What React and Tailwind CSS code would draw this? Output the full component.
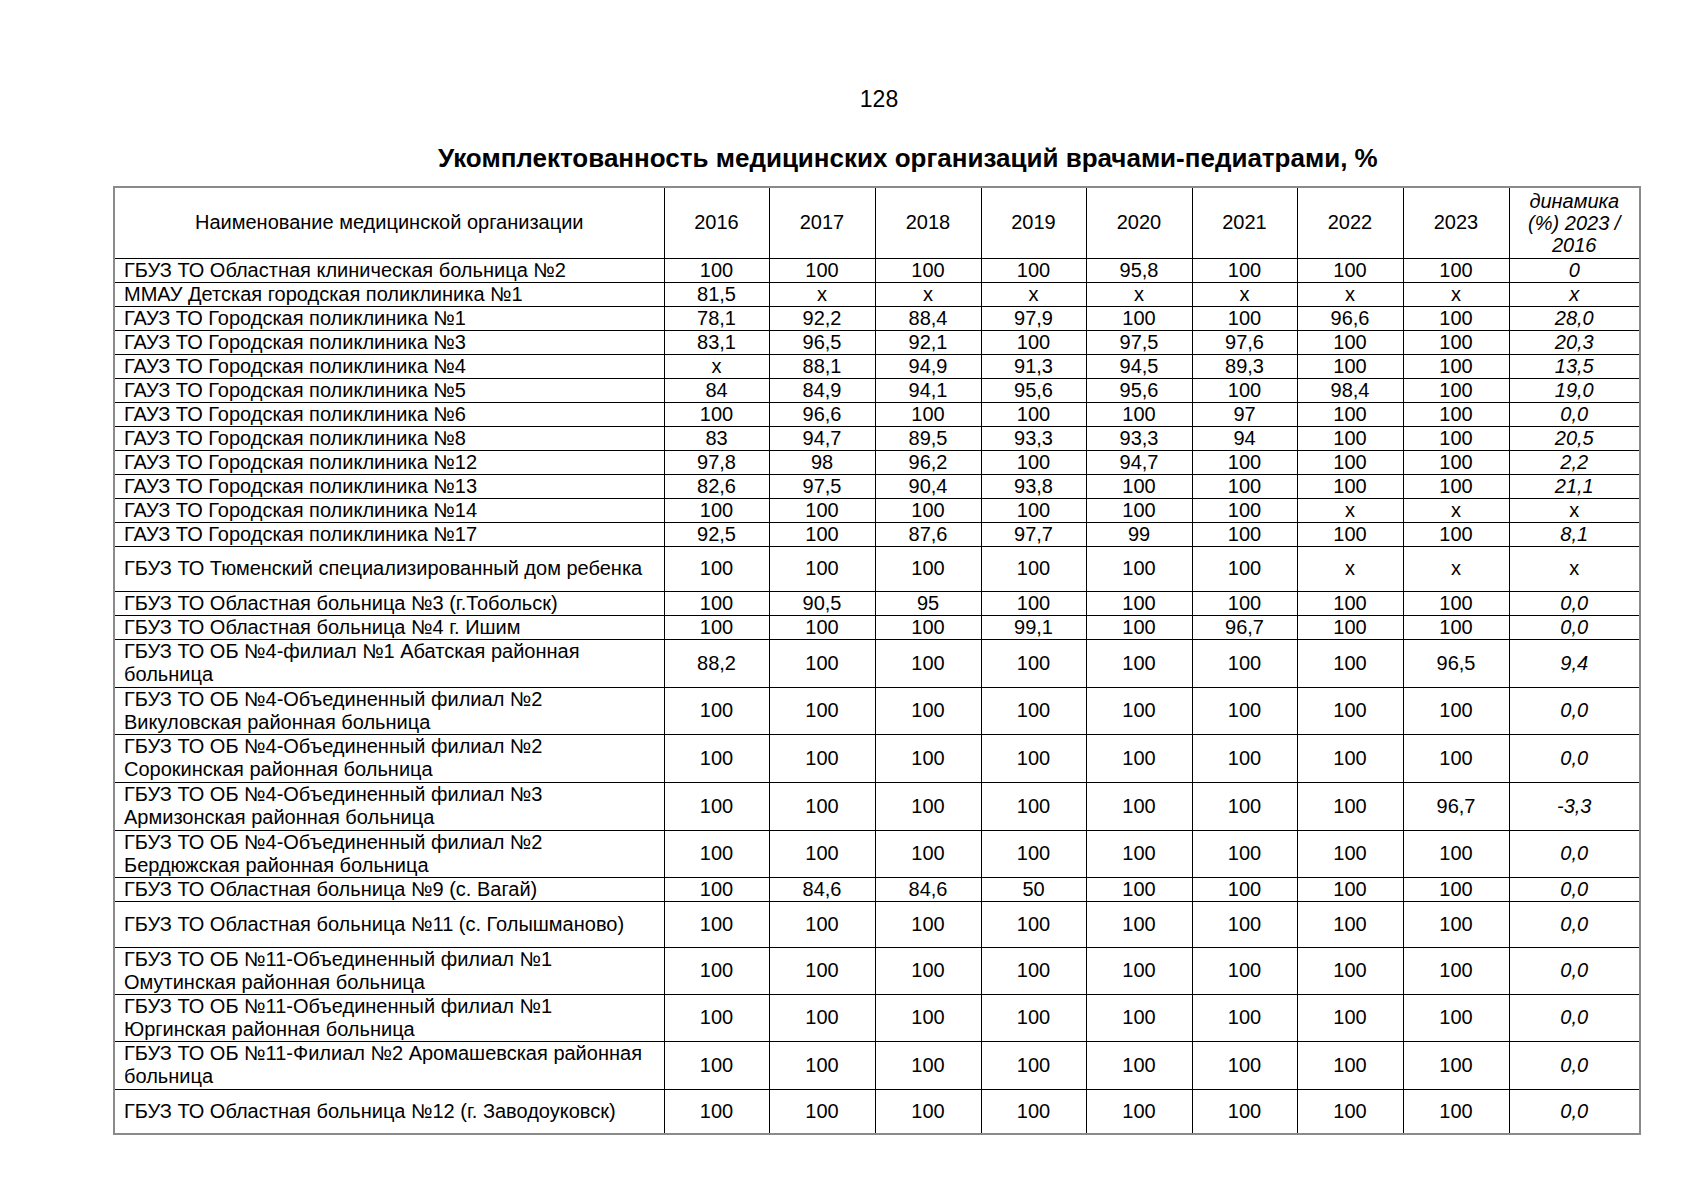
// Staffing of medical organisations with paediatricians, report page 128.
// Numbers are kept as strings so the decimal commas and "x" stay as printed.
const years = ['2016', '2017', '2018', '2019', '2020', '2021', '2022', '2023'];

const ALL_100 = ['100', '100', '100', '100', '100', '100', '100', '100'];

const rows = [
  { name: 'ГБУЗ ТО Областная клиническая больница №2', values: ['100', '100', '100', '100', '95,8', '100', '100', '100'], dyn: '0' },
  { name: 'ММАУ Детская городская поликлиника №1', values: ['81,5', 'x', 'x', 'x', 'x', 'x', 'x', 'x'], dyn: 'x' },
  { name: 'ГАУЗ ТО Городская поликлиника №1', values: ['78,1', '92,2', '88,4', '97,9', '100', '100', '96,6', '100'], dyn: '28,0' },
  { name: 'ГАУЗ ТО Городская поликлиника №3', values: ['83,1', '96,5', '92,1', '100', '97,5', '97,6', '100', '100'], dyn: '20,3' },
  { name: 'ГАУЗ ТО Городская поликлиника №4', values: ['x', '88,1', '94,9', '91,3', '94,5', '89,3', '100', '100'], dyn: '13,5' },
  { name: 'ГАУЗ ТО Городская поликлиника №5', values: ['84', '84,9', '94,1', '95,6', '95,6', '100', '98,4', '100'], dyn: '19,0' },
  { name: 'ГАУЗ ТО Городская поликлиника №6', values: ['100', '96,6', '100', '100', '100', '97', '100', '100'], dyn: '0,0' },
  { name: 'ГАУЗ ТО Городская поликлиника №8', values: ['83', '94,7', '89,5', '93,3', '93,3', '94', '100', '100'], dyn: '20,5' },
  { name: 'ГАУЗ ТО Городская поликлиника №12', values: ['97,8', '98', '96,2', '100', '94,7', '100', '100', '100'], dyn: '2,2' },
  { name: 'ГАУЗ ТО Городская поликлиника №13', values: ['82,6', '97,5', '90,4', '93,8', '100', '100', '100', '100'], dyn: '21,1' },
  { name: 'ГАУЗ ТО Городская поликлиника №14', values: ['100', '100', '100', '100', '100', '100', 'x', 'x'], dyn: 'x', upright: true },
  { name: 'ГАУЗ ТО Городская поликлиника №17', values: ['92,5', '100', '87,6', '97,7', '99', '100', '100', '100'], dyn: '8,1' },
  { name: 'ГБУЗ ТО Тюменский специализированный дом ребенка', values: ['100', '100', '100', '100', '100', '100', 'x', 'x'], dyn: 'x', upright: true, height: 'h-[45px]' },
  { name: 'ГБУЗ ТО Областная больница №3 (г.Тобольск)', values: ['100', '90,5', '95', '100', '100', '100', '100', '100'], dyn: '0,0' },
  { name: 'ГБУЗ ТО Областная больница №4 г. Ишим', values: ['100', '100', '100', '99,1', '100', '96,7', '100', '100'], dyn: '0,0' },
  { name: ['ГБУЗ ТО ОБ №4-филиал №1 Абатская районная', 'больница'], values: ['88,2', '100', '100', '100', '100', '100', '100', '96,5'], dyn: '9,4', height: 'h-[48px]' },
  { name: ['ГБУЗ ТО ОБ №4-Объединенный филиал №2', 'Викуловская районная больница'], values: ALL_100, dyn: '0,0', height: 'h-[47px]' },
  { name: ['ГБУЗ ТО ОБ №4-Объединенный филиал №2', 'Сорокинская районная больница'], values: ALL_100, dyn: '0,0', height: 'h-[48px]' },
  { name: ['ГБУЗ ТО ОБ №4-Объединенный филиал №3', 'Армизонская районная больница'], values: ['100', '100', '100', '100', '100', '100', '100', '96,7'], dyn: '-3,3', height: 'h-[48px]' },
  { name: ['ГБУЗ ТО ОБ №4-Объединенный филиал №2', 'Бердюжская районная больница'], values: ALL_100, dyn: '0,0', height: 'h-[46px]' },
  { name: 'ГБУЗ ТО Областная больница №9 (с. Вагай)', values: ['100', '84,6', '84,6', '50', '100', '100', '100', '100'], dyn: '0,0' },
  { name: 'ГБУЗ ТО Областная больница №11 (с. Голышманово)', values: ALL_100, dyn: '0,0', height: 'h-[46px]' },
  { name: ['ГБУЗ ТО ОБ №11-Объединенный филиал №1', 'Омутинская районная больница'], values: ALL_100, dyn: '0,0', height: 'h-[47px]' },
  { name: ['ГБУЗ ТО ОБ №11-Объединенный филиал №1', 'Юргинская районная больница'], values: ALL_100, dyn: '0,0', height: 'h-[47px]' },
  { name: ['ГБУЗ ТО ОБ №11-Филиал №2 Аромашевская районная', 'больница'], values: ALL_100, dyn: '0,0', height: 'h-[48px]' },
  { name: 'ГБУЗ ТО Областная больница №12 (г. Заводоуковск)', values: ALL_100, dyn: '0,0', height: 'h-[45px]' },
];

function NameCell({ name }) {
  const lines = Array.isArray(name) ? name : [name];
  return (
    <td className="border border-black px-[9px] py-0 text-left align-middle">
      {lines.map((line, i) => (
        <span key={i} className="block whitespace-nowrap">
          {line}
        </span>
      ))}
    </td>
  );
}

export default function App() {
  return (
    <div
      className="min-h-[1200px] bg-white pl-[113px] pt-[86px] text-black"
      style={{ fontFamily: '"Liberation Sans", Arial, sans-serif' }}
    >
      <div className="w-[1526px] pl-[6px] text-center text-[23px] leading-[26px]">128</div>

      <h1 className="mt-[32px] pl-[325px] text-[26px] font-bold leading-[28px] whitespace-nowrap">
        Укомплектованность медицинских организаций врачами-педиатрами, %
      </h1>

      <table className="mt-[14px] w-[1526px] table-fixed border-collapse border-2 border-[#8a8a8a] text-[20px] leading-[23px]">
        <colgroup>
          <col className="w-[550px]" />
          <col className="w-[105px]" />
          <col className="w-[106px]" />
          <col className="w-[106px]" />
          <col className="w-[105px]" />
          <col className="w-[106px]" />
          <col className="w-[105px]" />
          <col className="w-[106px]" />
          <col className="w-[106px]" />
          <col className="w-[131px]" />
        </colgroup>
        <thead>
          <tr className="h-[71px]">
            <th className="border border-black px-2 text-center align-middle font-normal">
              Наименование медицинской организации
            </th>
            {years.map((year) => (
              <th key={year} className="border border-black text-center align-middle font-normal">
                {year}
              </th>
            ))}
            <th className="border border-black px-[10px] text-center align-middle font-normal italic leading-[22px]">
              динамика (%) 2023 / 2016
            </th>
          </tr>
        </thead>
        <tbody>
          {rows.map((row, i) => (
            <tr key={i} className={row.height || 'h-[24px]'}>
              <NameCell name={row.name} />
              {row.values.map((value, j) => (
                <td key={j} className="border border-black p-0 text-center align-middle">
                  {value}
                </td>
              ))}
              <td className={`border border-black p-0 text-center align-middle ${row.upright ? '' : 'italic'}`}>
                {row.dyn}
              </td>
            </tr>
          ))}
        </tbody>
      </table>
    </div>
  );
}
